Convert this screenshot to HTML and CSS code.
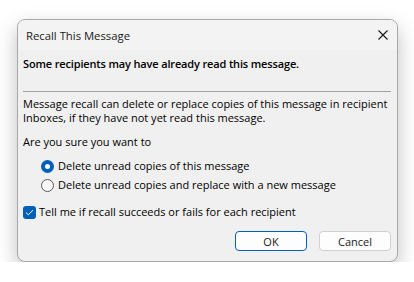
FILE: index.html
```html
<!DOCTYPE html>
<html lang="en">
  <head>
    <meta charset="UTF-8" />
    <meta name="viewport" content="width=device-width, initial-scale=1.0" />
    <title>Recall This Message</title>
    <link rel="stylesheet" href="styles.css">
  </head>
  <body>
    <div class="dialog">
      <div class="titleBar">
        <span class="titleText">Recall This Message</span>
        <button class="closeButton" aria-label="Close">
          <svg width="10" height="10" viewBox="0 0 10 10">
            <path d="M0.5 0.5 L9.5 9.5 M9.5 0.5 L0.5 9.5" stroke="#1a1a1a" stroke-width="1.1" fill="none" />
          </svg>
        </button>
      </div>

      <div class="content">
        <div class="warning">Some recipients may have already read this message.</div>
        <div class="separator"></div>
        <div class="info">
          Message recall can delete or replace copies of this message in recipient<br />
          Inboxes, if they have not yet read this message.
        </div>
        <div class="question">Are you sure you want to</div>

        <div class="options">
          <label class="option">
            <span class="radio checked"></span>
            Delete unread copies of this message
          </label>
          <label class="option">
            <span class="radio"></span>
            Delete unread copies and replace with a new message
          </label>
        </div>

        <label class="checkRow">
          <span class="checkbox">
            <svg width="9" height="7" viewBox="0 0 9 7">
              <path d="M1 3.6 L3.3 5.8 L8 1.2" stroke="#ffffff" stroke-width="1" fill="none" />
            </svg>
          </span>
          Tell me if recall succeeds or fails for each recipient
        </label>

        <div class="buttons">
          <button class="dialogButton primary">OK</button>
          <button class="dialogButton">Cancel</button>
        </div>
      </div>
    </div>
  </body>
</html>
```

FILE: styles.css
```css
body {
  margin: 0;
  background-color: #ffffff;
  font-family: "Open Sans", "Noto Sans", sans-serif;
  font-size: 11px;
  color: #000000;
}

.dialog {
  width: 379px;
  height: 241px;
  margin: 19px 0 0 17px;
  border: 1px solid #a8a8a8;
  border-radius: 8px;
  background-color: #f0f0f0;
  box-shadow: 0 8px 20px rgba(0, 0, 0, 0.25);
  overflow: hidden;
  display: flex;
  flex-direction: column;
}

.titleBar {
  height: 30px;
  background-color: #f3f3f3;
  display: flex;
  align-items: center;
  justify-content: space-between;
  padding: 0 9px 0 8px;
}

.titleText {
  font-size: 11.3px;
  color: #1a1a1a;
}

.closeButton {
  border: none;
  background: none;
  padding: 0;
  width: 10px;
  height: 10px;
  display: flex;
}

.content {
  padding: 0 6px 0 5px;
  display: flex;
  flex-direction: column;
}

.warning {
  font-weight: 600;
  letter-spacing: -0.15px;
  line-height: 16px;
  margin-top: 6px;
}

.separator {
  height: 1px;
  background-color: #a0a0a0;
  margin-top: 19px;
}

.info {
  line-height: 14px;
  margin-top: 5px;
}

.question {
  line-height: 16px;
  margin-top: 9px;
}

.options {
  display: flex;
  flex-direction: column;
  gap: 3px;
  margin-top: 8px;
  padding-left: 18px;
}

.option,
.checkRow {
  display: flex;
  align-items: center;
  gap: 4px;
  line-height: 16px;
}

.radio {
  width: 11px;
  height: 11px;
  border: 1px solid #5a5a5a;
  border-radius: 50%;
  background-color: #f7f7f7;
  flex-shrink: 0;
  position: relative;
}

.radio.checked {
  width: 13px;
  height: 13px;
  border: none;
  background-color: #005fb8;
}

.radio.checked::after {
  content: "";
  position: absolute;
  top: 4px;
  left: 4px;
  width: 5px;
  height: 5px;
  border-radius: 50%;
  background-color: #ffffff;
}

.checkRow {
  margin-top: 11px;
  gap: 3px;
}

.checkbox {
  width: 13px;
  height: 13px;
  border-radius: 3px;
  background-color: #005fb8;
  display: flex;
  align-items: center;
  justify-content: center;
  flex-shrink: 0;
}

.buttons {
  display: flex;
  justify-content: flex-end;
  gap: 12px;
  margin-top: 11px;
}

.dialogButton {
  width: 72px;
  height: 20px;
  font-family: inherit;
  font-size: 11px;
  color: #1a1a1a;
  background-color: #fdfdfd;
  border: 1px solid #d0d0d0;
  border-radius: 4px;
  padding: 0;
}

.dialogButton.primary {
  border-color: #005fb8;
}
```
